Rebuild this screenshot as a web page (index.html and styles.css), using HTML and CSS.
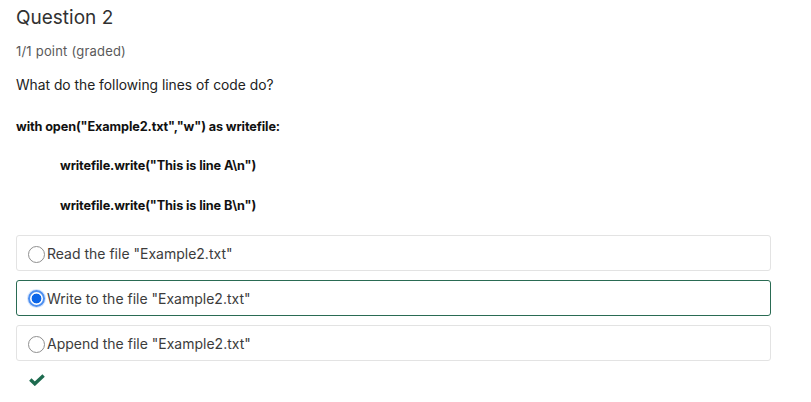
FILE: index.html
```html
<!DOCTYPE html>
<html>
<head>
<meta charset="utf-8">
<link rel="stylesheet" href="styles.css">
</head>
<body>
<div class="problem">
  <h3 class="title">Question 2</h3>
  <div class="points">1/1 point (graded)</div>
  <p class="prompt">What do the following lines of code do?</p>
  <p class="code first">with open("Example2.txt","w") as writefile:</p>
  <p class="code indent second">writefile.write("This is line A\n")</p>
  <p class="code indent third">writefile.write("This is line B\n")</p>
  <div class="choices">
    <label class="choice"><span class="radio"></span>Read the file "Example2.txt"</label>
    <label class="choice selected"><span class="radio checked"></span>Write to the file "Example2.txt"</label>
    <label class="choice"><span class="radio"></span>Append the file "Example2.txt"</label>
  </div>
  <div class="status">
    <svg width="16" height="12" viewBox="0 0 16 12"><path d="M1.3 5.6 L5.8 9.8 L14.6 1.4" fill="none" stroke="#1e6b4f" stroke-width="3.4" stroke-linecap="butt" stroke-linejoin="miter"/></svg>
  </div>
</div>
</body>
</html>
```
FILE: styles.css
```css
html, body { margin: 0; padding: 0; background: #fff; }
body { font-family: Inter, "Noto Sans", sans-serif; color: #313131; }
.problem { padding: 6px 40px 0 16px; }
.title { margin: 0; font-size: 19px; font-weight: 400; color: #313131; line-height: 24px; }
.points { margin-top: 13px; font-size: 13px; letter-spacing: 0.2px; color: #5a5a5a; line-height: 16px; }
.prompt { margin: 17px 0 0; font-size: 13.8px; line-height: 18px; color: #222; }
.code { margin: 0; font-size: 12.7px; letter-spacing: -0.12px; font-weight: 700; line-height: 18px; color: #111; }
.code.first { margin-top: 24px; }
.code.indent { padding-left: 44px; }
.code.second { margin-top: 21px; }
.code.third { margin-top: 22px; }
.choices { margin-top: 20px; display: flex; flex-direction: column; gap: 9px; }
.choice { display: flex; align-items: center; height: 34px; border: 1px solid #e3e3e3; border-radius: 3px; padding-left: 11px; font-size: 14px; color: #3c3c3c; }
.choice.selected { border-color: #2a6b53; }
.radio { width: 17px; height: 17px; border: 1px solid #8f8f8f; border-radius: 50%; box-sizing: border-box; margin: 2px 2px 0 0; flex: none; background: #fff; }
.radio.checked { border: 2px solid #4d8ff0; background: radial-gradient(circle, #0c66e8 0 4.6px, #fff 5.2px); box-shadow: 0 0 0 1px #d6e5fc; margin-top: 0; }
.status { margin-top: 13px; padding-left: 13px; }
.status svg { display: block; }
```
